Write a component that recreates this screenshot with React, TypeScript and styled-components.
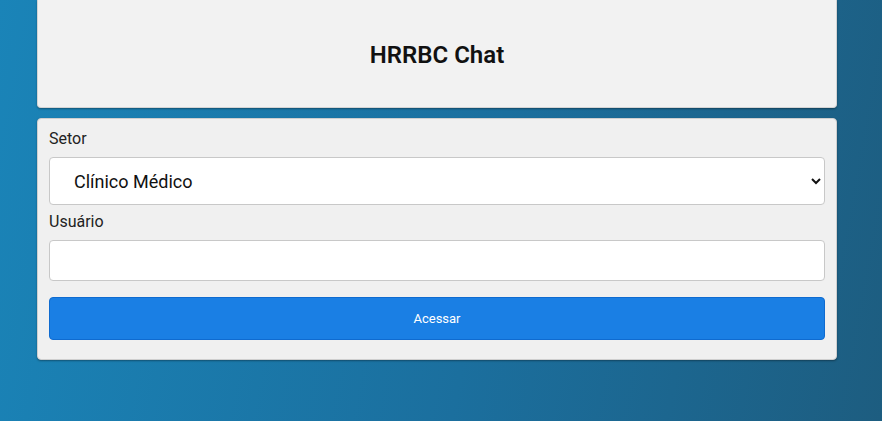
import React from 'react';
import styled, { createGlobalStyle } from 'styled-components';

const GlobalStyle = createGlobalStyle`
  html, body {
    margin: 0;
    padding: 0;
    height: 100%;
  }
  body {
    font-family: Roboto, "Liberation Sans", Arial, sans-serif;
    background: linear-gradient(100deg, #1a84b8 0%, #1b6f9e 55%, #1d5d80 100%);
    min-height: 100vh;
  }
`;

const Page = styled.div`
  min-height: 100vh;
  padding: 0 45px 0 37px;
  box-sizing: border-box;
`;

const Header = styled.header`
  height: 108px;
  display: flex;
  align-items: center;
  justify-content: center;
  background: #f2f2f2;
  border: 1px solid #d4d4d4;
  border-top: none;
  border-radius: 0 0 4px 4px;
  box-shadow: 0 1px 2px rgba(0, 0, 0, 0.35);
  box-sizing: border-box;
`;

const Title = styled.h1`
  margin: 2px 0 0;
  font-size: 24px;
  font-weight: 600;
  color: #111;
`;

const Form = styled.form`
  margin-top: 10px;
  display: flex;
  flex-direction: column;
  padding: 8px 11px 19px;
  background: #f0f0f0;
  border: 1px solid #cfcfcf;
  border-radius: 4px;
  box-shadow: 0 1px 2px rgba(0, 0, 0, 0.35);
`;

const Label = styled.label<{ $top?: number }>`
  display: block;
  margin-top: ${(p) => p.$top ?? 0}px;
  margin-bottom: 6px;
  font-size: 16px;
  line-height: 24px;
  color: #222;
`;

const Select = styled.select`
  height: 48px;
  padding: 0 16px 0 20px;
  font-family: Roboto, "Liberation Sans", Arial, sans-serif;
  font-size: 18px;
  color: #111;
  background: #fff;
  border: 1px solid #c8c8c8;
  border-radius: 4px;
  outline: none;
`;

const Input = styled.input`
  height: 41px;
  padding: 0 12px;
  font-size: 16px;
  background: #fff;
  border: 1px solid #c8c8c8;
  border-radius: 4px;
  box-sizing: border-box;
  outline: none;
`;

const Button = styled.button`
  margin-top: 16px;
  height: 43px;
  font-family: Roboto, "Liberation Sans", Arial, sans-serif;
  font-size: 13px;
  color: #fff;
  background: #1a7fe4;
  border: 1px solid #0f6bd0;
  border-radius: 4px;
  cursor: pointer;
`;

const App = () => {
  return (
    <>
      <GlobalStyle />
      <Page>
        <Header>
          <Title>HRRBC Chat</Title>
        </Header>
        <Form onSubmit={(e) => e.preventDefault()}>
          <Label htmlFor="setor">Setor</Label>
          <Select id="setor" defaultValue="clinico">
            <option value="clinico">Clínico Médico</option>
            <option value="cirurgico">Clínico Cirúrgico</option>
            <option value="uti">UTI</option>
          </Select>
          <Label htmlFor="usuario" $top={5}>Usuário</Label>
          <Input id="usuario" type="text" />
          <Button type="submit">Acessar</Button>
        </Form>
      </Page>
    </>
  );
};

export default App;
